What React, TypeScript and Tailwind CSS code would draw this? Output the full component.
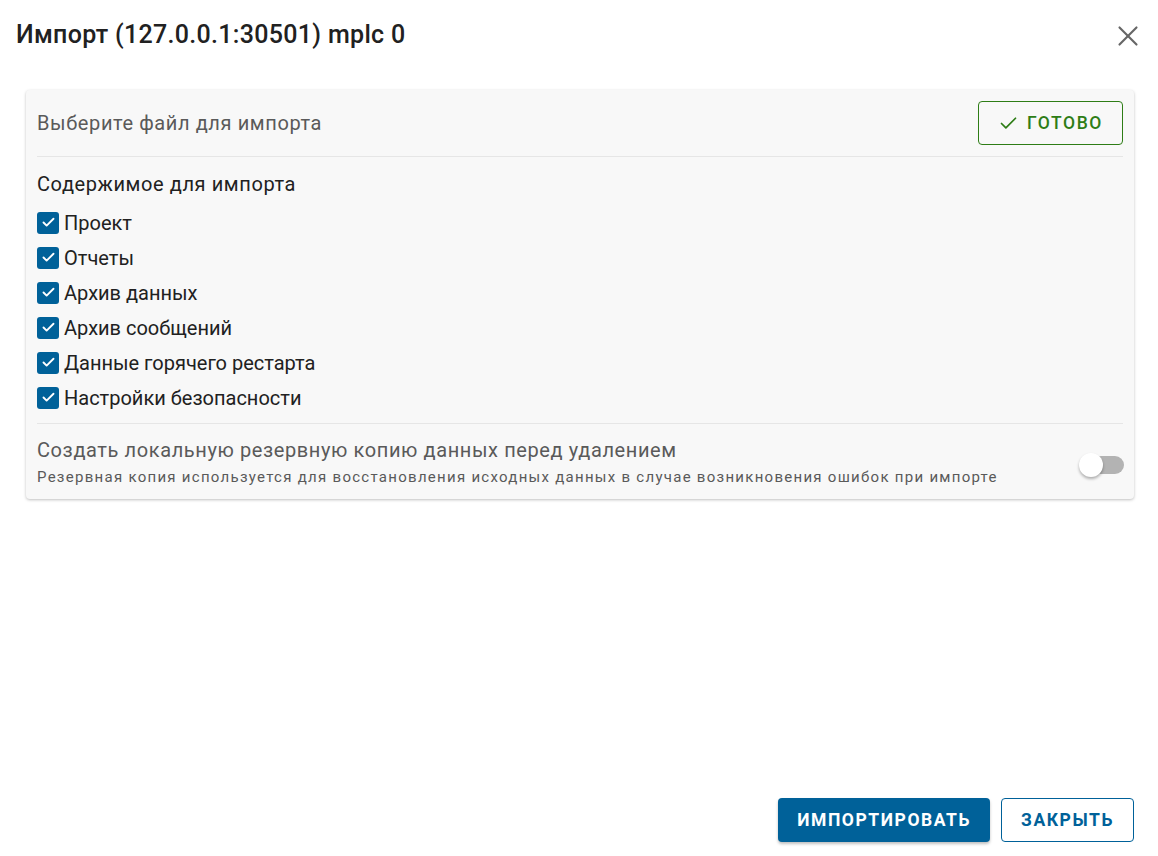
import React, { useState } from 'react';
import { X, Check } from 'lucide-react';

const items = [
  'Проект',
  'Отчеты',
  'Архив данных',
  'Архив сообщений',
  'Данные горячего рестарта',
  'Настройки безопасности',
];

export default function App() {
  const [checked, setChecked] = useState(items.map(() => true));
  const [backup, setBackup] = useState(false);

  return (
    <div className="h-[856px] w-full bg-white flex flex-col font-['Roboto',sans-serif] text-[#212121]">
      <div className="h-[70px] flex items-center justify-between pl-4 pr-[13px]">
        <h1 className="text-[25px] font-medium tracking-[0.0125em] text-[#212121]">Импорт (127.0.0.1:30501) mplc 0</h1>
        <button className="text-[#666] flex items-center justify-center mt-[1px]">
          <X size={34} strokeWidth={1.5} />
        </button>
      </div>

      <div className="pl-[26px] pr-[24px] pt-5">
        <div className="bg-[#f8f8f8] rounded-[4px] shadow-[0_1px_3px_rgba(0,0,0,0.25)] p-[11px] pb-[10px]">
          <div className="flex items-center justify-between">
            <span className="text-[20px] text-[#5a5a5a] tracking-[0.03em]">Выберите файл для импорта</span>
            <button className="h-[44px] w-[145px] border border-[#2e7d16] rounded-[4px] flex items-center justify-center gap-2 text-[#2e7d16] text-[17.5px] font-medium tracking-[0.0892em]">
              <Check size={21} strokeWidth={2} />
              ГОТОВО
            </button>
          </div>
          <div className="h-px bg-[#e6e6e6] mt-[11px]" />

          <div className="pt-[14px] text-[20px] text-[#212121] tracking-[0.03em] leading-[26px]">Содержимое для импорта</div>
          <div className="flex flex-col pt-[8px]">
            {items.map((it, i) => (
              <label key={it} className="h-[35px] flex items-center gap-[5px] cursor-pointer">
                <span
                  onClick={() => setChecked(c => c.map((v, j) => (j === i ? !v : v)))}
                  className={checked[i] ? 'w-[22px] h-[22px] rounded-[3px] bg-[#006199] flex items-center justify-center text-white' : 'w-[22px] h-[22px] rounded-[3px] border-2 border-[#757575]'}
                >
                  {checked[i] && <Check size={15} strokeWidth={3} />}
                </span>
                <span className="text-[20px] text-[#212121]">{it}</span>
              </label>
            ))}
          </div>
          <div className="h-px bg-[#e6e6e6] mt-[8px]" />

          <div className="flex items-center justify-between pt-[12px]">
            <div className="flex flex-col">
              <span className="text-[20px] text-[#5a5a5a] tracking-[0.03em] leading-[28px]">Создать локальную резервную копию данных перед удалением</span>
              <span className="text-[15px] text-[#5a5a5a] tracking-[0.085em] leading-[24px] pt-[1px]">Резервная копия используется для восстановления исходных данных в случае возникновения ошибок при импорте</span>
            </div>
            <button onClick={() => setBackup(!backup)} className="relative w-[45px] h-[24px] mr-[-1px] mt-[4px]">
              <span className={backup ? 'absolute left-[13px] top-[3px] w-[32px] h-[18px] rounded-full bg-[#7fb0cc]' : 'absolute left-[13px] top-[3px] w-[32px] h-[18px] rounded-full bg-[#b3b3b3]'} />
              <span className={backup ? 'absolute left-[21px] top-0 w-[24px] h-[24px] rounded-full bg-[#006199] shadow-[0_2px_3px_rgba(0,0,0,0.3)]' : 'absolute left-0 top-0 w-[24px] h-[24px] rounded-full bg-white shadow-[0_2px_3px_rgba(0,0,0,0.3)]'} />
            </button>
          </div>
        </div>
      </div>

      <div className="flex-1" />

      <div className="flex justify-end gap-[11px] pr-[24px] pb-[14px]">
        <button className="h-[44px] px-[19px] rounded-[4px] bg-[#006199] text-white text-[17.5px] font-bold tracking-[0.0892em] shadow-[0_2px_3px_rgba(0,0,0,0.25)]">ИМПОРТИРОВАТЬ</button>
        <button className="h-[44px] px-[19px] rounded-[4px] border border-[#006199] text-[#006199] text-[17.5px] font-bold tracking-[0.0892em]">ЗАКРЫТЬ</button>
      </div>
    </div>
  );
}
